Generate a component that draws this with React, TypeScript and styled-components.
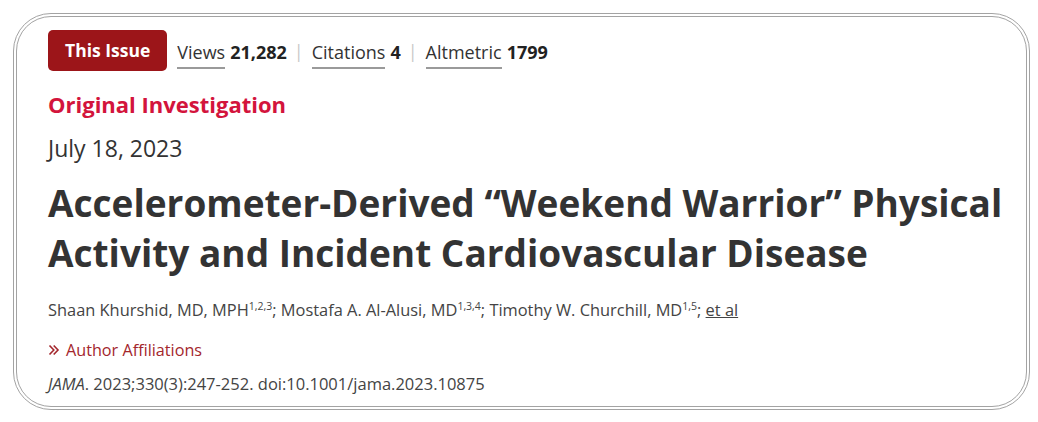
import React from 'react';
import styled, { createGlobalStyle } from 'styled-components';

const GlobalStyle = createGlobalStyle`
    html, body {
        margin:0;
        padding:0;
        background:#ffffff;
    }
    body {
        font-family: "Open Sans", "Liberation Sans", sans-serif;
        color:#333333;
    }
`

const metrics = [
    { label: 'Views', value: '21,282' },
    { label: 'Citations', value: '4' },
    { label: 'Altmetric', value: '1799' },
]

const authors = [
    { name: 'Shaan Khurshid, MD, MPH', sup: '1,2,3' },
    { name: 'Mostafa A. Al-Alusi, MD', sup: '1,3,4' },
    { name: 'Timothy W. Churchill, MD', sup: '1,5' },
]

const App = () => {
    return (
        <Page>
            <GlobalStyle />
            <Card>
                <TopBar>
                    <IssueBadge>This Issue</IssueBadge>
                    {metrics.map((metric, i) => (
                        <React.Fragment key={metric.label}>
                            {i > 0 && <Divider>|</Divider>}
                            <Metric>
                                <MetricLabel>{metric.label}</MetricLabel>
                                <MetricValue>{metric.value}</MetricValue>
                            </Metric>
                        </React.Fragment>
                    ))}
                </TopBar>
                <ArticleType>Original Investigation</ArticleType>
                <PubDate>July 18, 2023</PubDate>
                <Title>
                    Accelerometer-Derived “Weekend Warrior” Physical Activity and Incident Cardiovascular Disease
                </Title>
                <Authors>
                    {authors.map((author) => (
                        <React.Fragment key={author.name}>
                            {author.name}<sup>{author.sup}</sup>;{' '}
                        </React.Fragment>
                    ))}
                    <EtAl href="#">et al</EtAl>
                </Authors>
                <Affiliations>
                    <Chevron viewBox="0 0 12 12">
                        <path d="M1.5 1.5 L5.8 6 L1.5 10.5 M5.7 1.5 L10 6 L5.7 10.5" fill="none" stroke="currentColor" strokeWidth="1.6" />
                    </Chevron>
                    Author Affiliations
                </Affiliations>
                <Citation>
                    <em>JAMA</em>. 2023;330(3):247-252. doi:10.1001/jama.2023.10875
                </Citation>
            </Card>
        </Page>
    );
};

const Page = styled.div`
    width:1038px;
    height:422px;
    padding:13px 8px 12px 13px;
    box-sizing:border-box;
`
const Card = styled.div`
    height:100%;
    box-sizing:border-box;
    border:4px double #a3a3a3;
    border-radius:38px;
    padding:13px 20px 0 31px;
    display:flex;
    flex-direction:column;
`
const TopBar = styled.div`
    display:flex;
    align-items:center;
    height:41px;
`
const IssueBadge = styled.div`
    background:#9c1519;
    color:#ffffff;
    font-weight:700;
    font-size:17.5px;
    height:41px;
    line-height:41px;
    padding:0 17px 0 17px;
    border-radius:5px;
    margin-right:10px;
`
const Metric = styled.div`
    display:flex;
    align-items:baseline;
    gap:5px;
    font-size:18px;
    margin-top:8px;
`
const MetricLabel = styled.span`
    color:#333333;
    border-bottom:2px solid #9a9a9a;
    padding-bottom:3px;
`
const MetricValue = styled.span`
    font-weight:700;
    color:#222222;
`
const Divider = styled.span`
    color:#c8c8c8;
    font-size:18px;
    margin:0 8px 0 7px;
`
const ArticleType = styled.div`
    margin-top:19px;
    color:#d3143c;
    font-weight:700;
    font-size:22px;
    line-height:28px;
`
const PubDate = styled.div`
    margin-top:16px;
    font-size:23px;
    line-height:28px;
    color:#333333;
`
const Title = styled.h1`
    margin:16px 0 0;
    font-size:37px;
    line-height:50px;
    font-weight:700;
    color:#333333;
`
const Authors = styled.div`
    margin-top:22px;
    font-size:16.4px;
    line-height:20px;
    color:#444444;
    sup {
        font-size:10.5px;
        line-height:0;
    }
`
const EtAl = styled.a`
    color:#444444;
    text-decoration:underline;
`
const Affiliations = styled.div`
    margin-top:20px;
    display:flex;
    align-items:center;
    gap:6px;
    font-size:16.2px;
    line-height:20px;
    color:#a3262c;
`
const Chevron = styled.svg`
    width:12px;
    height:12px;
`
const Citation = styled.div`
    margin-top:14px;
    font-size:16.5px;
    line-height:20px;
    color:#444444;
`

export default App;
